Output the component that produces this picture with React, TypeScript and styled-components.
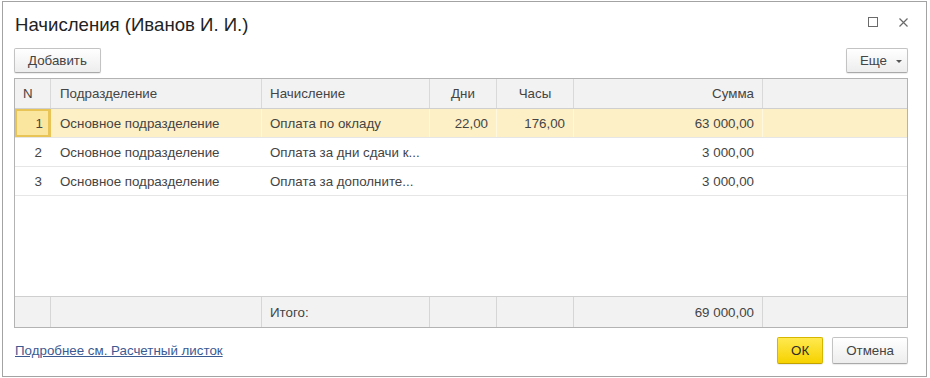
import React from "react";
import styled, { createGlobalStyle, css } from "styled-components";

const Global = createGlobalStyle`
  html, body { margin: 0; padding: 0; background: #ffffff; }
  body { font-family: "Liberation Sans", Arial, sans-serif; }
`;

const Dialog = styled.div`
  box-sizing: border-box;
  margin: 1px 0 0 2px;
  width: 925px;
  height: 376px;
  border: 1px solid #a3a3a3;
  background: #fff;
  padding: 0 18px 0 11px;
  display: flex;
  flex-direction: column;
`;

const Header = styled.div`
  height: 44px;
  display: flex;
  align-items: center;
  justify-content: space-between;
`;

const Title = styled.div`
  font-size: 18.6px;
  line-height: 22px;
  color: #222;
  padding-left: 1px;
  margin-top: 1px;
`;

const WinControls = styled.div`
  align-self: flex-start;
  margin-top: 15px;
  display: flex;
  gap: 21px;
  align-items: center;
`;

const Toolbar = styled.div`
  margin-top: 2px;
  height: 25px;
  display: flex;
  justify-content: space-between;
`;

const Button = styled.button<{ $primary?: boolean; $menu?: boolean }>`
  box-sizing: border-box;
  height: 100%;
  min-width: 46px;
  padding: ${(p) => (p.$menu ? "0 5px 0 13px" : "0 13px")};
  justify-content: center;
  font-family: "Liberation Sans", Arial, sans-serif;
  font-size: 13.33px;
  color: #444;
  border-radius: 2px;
  border: 1px solid #c3c3c3;
  border-bottom-color: #a9a9a9;
  background: linear-gradient(#ffffff, #ededed);
  box-shadow: 0 1px 1px rgba(0, 0, 0, 0.08);
  display: flex;
  align-items: center;
  gap: 9px;
  cursor: pointer;
  ${(p) =>
    p.$primary &&
    css`
      border-color: #d7b600;
      border-bottom-color: #c2a200;
      background: linear-gradient(#ffe94f, #f6d200);
      color: #2b2b2b;
    `}
`;

const Caret = styled.span`
  width: 0;
  height: 0;
  border-left: 3px solid transparent;
  border-right: 3px solid transparent;
  border-top: 3px solid #555;
  margin-top: 1px;
`;

const COLS = "36px 211px 168px 67px 77px 189px 1fr";

const Table = styled.div`
  box-sizing: border-box;
  margin-top: 5px;
  height: 250px;
  border: 1px solid #b3b3b3;
  display: flex;
  flex-direction: column;
  font-size: 13.33px;
  color: #444;
`;

const RowBase = styled.div`
  display: grid;
  grid-template-columns: ${COLS};
  box-sizing: border-box;
`;

const HeaderRow = styled(RowBase)`
  height: 30px;
  background: #f2f2f2;
  border-bottom: 1px solid #cfcfcf;
  --sep: #d9d9d9;
`;

const DataRow = styled(RowBase)<{ $selected?: boolean }>`
  height: 29px;
  border-bottom: 1px solid #e6e6e6;
  background: ${(p) => (p.$selected ? "#fdf0c6" : "#fff")};
  --sep: ${(p) => (p.$selected ? "#fff8df" : "#fff")};
`;

const Body = styled.div`
  flex: 1;
`;

const FooterRow = styled(RowBase)`
  height: 31px;
  background: #f2f2f2;
  border-top: 1px solid #cfcfcf;
  --sep: #d6d6d6;
`;

const Cell = styled.div<{ $align?: "left" | "center" | "right"; $last?: boolean; $focus?: boolean; $pad?: number }>`
  display: flex;
  align-items: center;
  justify-content: ${(p) =>
    p.$align === "right" ? "flex-end" : p.$align === "center" ? "center" : "flex-start"};
  padding: 0 8px 0 ${(p) => p.$pad ?? 8}px;
  border-right: ${(p) => (p.$last ? "none" : "1px solid var(--sep)")};
  white-space: nowrap;
  overflow: hidden;
  ${(p) =>
    p.$focus &&
    css`
      background: #fbe6a0;
      box-shadow: inset 0 0 0 2px #e8c457;
      border-right-color: #e8c457;
      padding-right: 7px;
    `}
`;

const BottomBar = styled.div`
  margin-top: 9px;
  height: 27px;
  display: flex;
  align-items: center;
  justify-content: space-between;
`;

const Link = styled.a`
  font-size: 13.33px;
  color: #3c5a92;
  text-decoration: underline;
  padding-left: 1px;
  cursor: pointer;
`;

const Buttons = styled.div`
  height: 100%;
  display: flex;
  gap: 9px;
`;

const rows = [
  { n: "1", dept: "Основное подразделение", acc: "Оплата по окладу", days: "22,00", hours: "176,00", sum: "63 000,00" },
  { n: "2", dept: "Основное подразделение", acc: "Оплата за дни сдачи к...", days: "", hours: "", sum: "3 000,00" },
  { n: "3", dept: "Основное подразделение", acc: "Оплата за дополните...", days: "", hours: "", sum: "3 000,00" },
];

export default function App() {
  return (
    <>
      <Global />
      <Dialog>
        <Header>
          <Title>Начисления (Иванов И. И.)</Title>
          <WinControls>
            <svg width="10" height="10" viewBox="0 0 10 10">
              <rect x="0.5" y="0.5" width="9" height="9" fill="none" stroke="#6a6a6a" strokeWidth="1" />
            </svg>
            <svg width="9" height="9" viewBox="0 0 9 9">
              <path d="M0.5 0.5L8.5 8.5M8.5 0.5L0.5 8.5" stroke="#6a6a6a" strokeWidth="1.2" />
            </svg>
          </WinControls>
        </Header>
        <Toolbar>
          <Button>Добавить</Button>
          <Button $menu>
            Еще <Caret />
          </Button>
        </Toolbar>
        <Table>
          <HeaderRow>
            <Cell>N</Cell>
            <Cell $pad={9}>Подразделение</Cell>
            <Cell>Начисление</Cell>
            <Cell $align="center">Дни</Cell>
            <Cell $align="center">Часы</Cell>
            <Cell $align="right">Сумма</Cell>
            <Cell $last />
          </HeaderRow>
          <Body>
            {rows.map((r, i) => (
              <DataRow key={r.n} $selected={i === 0}>
                <Cell $align="right" $focus={i === 0}>{r.n}</Cell>
                <Cell $pad={9}>{r.dept}</Cell>
                <Cell>{r.acc}</Cell>
                <Cell $align="right">{r.days}</Cell>
                <Cell $align="right">{r.hours}</Cell>
                <Cell $align="right">{r.sum}</Cell>
                <Cell $last />
              </DataRow>
            ))}
          </Body>
          <FooterRow>
            <Cell />
            <Cell />
            <Cell>Итого:</Cell>
            <Cell />
            <Cell />
            <Cell $align="right">69 000,00</Cell>
            <Cell $last />
          </FooterRow>
        </Table>
        <BottomBar>
          <Link>Подробнее см. Расчетный листок</Link>
          <Buttons>
            <Button $primary>ОК</Button>
            <Button>Отмена</Button>
          </Buttons>
        </BottomBar>
      </Dialog>
    </>
  );
}
